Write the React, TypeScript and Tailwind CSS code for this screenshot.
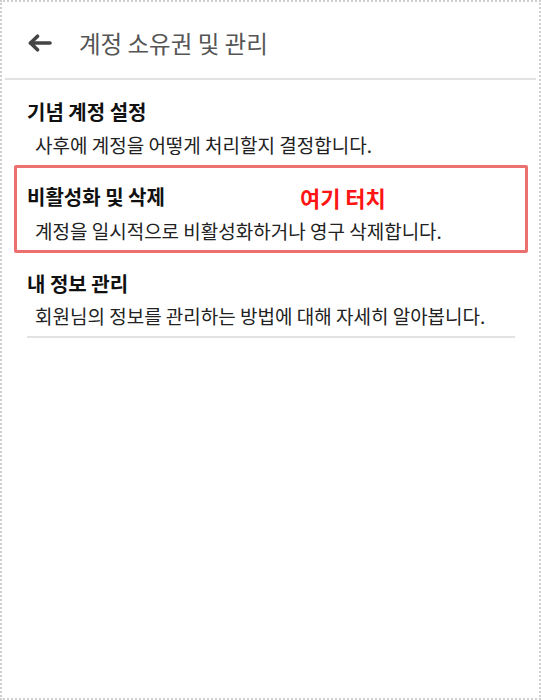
interface Item {
  title: string;
  desc: string;
}

const font = { fontFamily: '"Noto Sans CJK KR", "Noto Sans", sans-serif' };

function BackArrow() {
  return (
    <svg width="26" height="18" viewBox="0 0 26 18" fill="none" stroke="#444" strokeWidth="3.6" strokeLinecap="round" strokeLinejoin="round">
      <path d="M3.5 9H23" />
      <path d="M10.5 2.2L3.5 9l7 6.8" />
    </svg>
  );
}

function Title({ children }: { children: string }) {
  return <h3 className="text-[20px] leading-[28px] font-bold text-[#111]">{children}</h3>;
}

function Desc({ children, className }: { children: string; className: string }) {
  return <p className={`pl-[8px] text-[19px] leading-[26px] text-[#222] ${className}`}>{children}</p>;
}

export default function App() {
  const items: Item[] = [
    { title: "기념 계정 설정", desc: "사후에 계정을 어떻게 처리할지 결정합니다." },
    { title: "비활성화 및 삭제", desc: "계정을 일시적으로 비활성화하거나 영구 삭제합니다." },
    { title: "내 정보 관리", desc: "회원님의 정보를 관리하는 방법에 대해 자세히 알아봅니다." },
  ];

  return (
    <div
      className="w-[541px] h-[700px] bg-white border-2 border-dotted border-[#cfcfcf] flex flex-col"
      style={font}
    >
      {/* Header */}
      <div className="flex items-center h-[78px] pt-[6px] pl-[22px] mx-[3px] border-b-2 border-[#e2e2e2]">
        <BackArrow />
        <h1 className="ml-[26px] text-[23.5px] leading-[32px] text-[#555]">계정 소유권 및 관리</h1>
      </div>

      {/* Memorial */}
      <div className="px-[25px] pt-[18px] pb-[7px]">
        <Title>{items[0].title}</Title>
        <Desc className="mt-[6px]">{items[0].desc}</Desc>
      </div>

      {/* Deactivate / delete (highlighted) */}
      <div className="ml-[12px] mr-[11px] border-[3px] border-[#ec7070] rounded-[2px] pl-[10px] pt-[15px] pb-[6px]">
        <div className="flex items-center">
          <Title>{items[1].title}</Title>
          <span className="ml-[135px] text-[22px] leading-[28px] font-bold text-[#ff1414]">여기 터치</span>
        </div>
        <Desc className="mt-[7px]">{items[1].desc}</Desc>
      </div>

      {/* My info */}
      <div className="pl-[25px] pt-[17px]">
        <Title>{items[2].title}</Title>
        <Desc className="mt-[5px]">{items[2].desc}</Desc>
        <div className="mt-[7px] w-[488px] border-b-2 border-[#e2e2e2]" />
      </div>
    </div>
  );
}
